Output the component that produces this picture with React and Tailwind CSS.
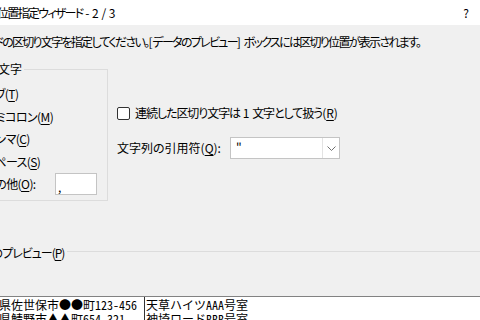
import React from 'react';

const Key = ({ k }) => <u className="underline underline-offset-[2px]">{k}</u>;

function Option({ label, k, suffix = '' }) {
  return (
    <div className="h-[22.5px] flex items-center pl-[29px] whitespace-nowrap tracking-[-0.6px]">
      <span>{label}(<Key k={k} />){suffix}</span>
    </div>
  );
}

export default function App() {
  return (
    <div className="w-[480px] h-[320px] overflow-hidden bg-[#f0f0f0] text-[12px] leading-4 text-black font-['Noto_Sans_CJK_JP',sans-serif] [font-feature-settings:'palt']">
      {/* title bar */}
      <div className="h-[25px] bg-white flex items-center justify-between whitespace-pre">
        <span className="ml-[-32px]">
          <span className="tracking-[-1.7px]">区切り位置指定ウィザード</span>
          <span> - 2 / 3</span>
        </span>
        <span className="mr-[11px]">?</span>
      </div>

      <p className="mt-[9px] ml-[-41px] whitespace-pre">
        <span className="tracking-[-1.7px]">フィールドの区切り文字を指定してください。</span>
        <span>[</span>
        <span className="tracking-[-1.7px]">データのプレビュー</span>
        <span>] </span>
        <span className="tracking-[-1.7px]">ボックスには区切り位置が表示されます。</span>
      </p>

      <div className="flex mt-[11px]">
        <fieldset className="ml-[-45px] w-[153px] border border-[#dcdcdc] pt-[6px] pb-[4px]">
          <legend className="ml-[6px] px-[2px] leading-4">区切り文字</legend>
          <Option label="タブ" k="T" />
          <Option label="セミコロン" k="M" />
          <Option label="カンマ" k="C" />
          <Option label="スペース" k="S" />
          <div className="h-[22.5px] flex items-center pl-[29px] whitespace-nowrap">
            <span className="w-[70px] tracking-[-0.6px]">その他(<Key k="O" />):</span>
            <div className="w-[42px] h-[22px] bg-white border border-[#c4c4c4] pl-[2px] leading-[26px]">,</div>
          </div>
        </fieldset>

        <div className="ml-[9px] pt-[44px] flex flex-col">
          <label className="h-4 flex items-center whitespace-pre">
            <span className="w-[13px] h-[13px] rounded-[2px] border border-[#333] bg-white mr-[5px]" />
            <span>
              <span className="tracking-[-1.05px]">連続した区切り文字は</span>
              <span> 1 </span>
              <span className="tracking-[-1.05px]">文字として扱う</span>
              <span>(<Key k="R" />)</span>
            </span>
          </label>
          <div className="mt-[16px] h-[22px] flex items-center whitespace-nowrap">
            <span className="w-[113px]">文字列の引用符(<Key k="Q" />):</span>
            <div className="w-[110px] h-[22px] bg-white border border-[#c4c4c4] flex">
              <span className="flex-1 pl-[5px] leading-[18px]">"</span>
              <span className="w-[17px] border-l border-[#e3e3e3] flex items-center justify-center">
                <svg width="9" height="5" viewBox="0 0 9 5">
                  <path d="M0.5 0.5 L4.5 4.5 L8.5 0.5" fill="none" stroke="#707070" strokeWidth="1" />
                </svg>
              </span>
            </div>
          </div>
        </div>
      </div>

      <div className="mt-[44px] flex items-center whitespace-nowrap">
        <span className="ml-[-39px] tracking-[-1px]">データのプレビュー(<Key k="P" />)</span>
        <div className="flex-1 h-px bg-[#dcdcdc] ml-[3px] mb-[3px]" />
      </div>

      <div className="mt-[35px] h-[30px] bg-white border-t border-[#828282] flex font-['Noto_Sans_Mono_CJK_JP','Noto_Sans_CJK_JP',monospace] [font-feature-settings:normal] leading-[14px] whitespace-nowrap">
        <div className="ml-[-25px] w-[170px] border-r border-[#333] pt-[1px]">
          <div>長崎県佐世保市●●町123-456</div>
          <div>福井県鯖野市▲▲町654-321</div>
        </div>
        <div className="pl-[1px] pt-[1px]">
          <div>天草ハイツAAA号室</div>
          <div>神埼ロードBBB号室</div>
        </div>
      </div>
    </div>
  );
}
